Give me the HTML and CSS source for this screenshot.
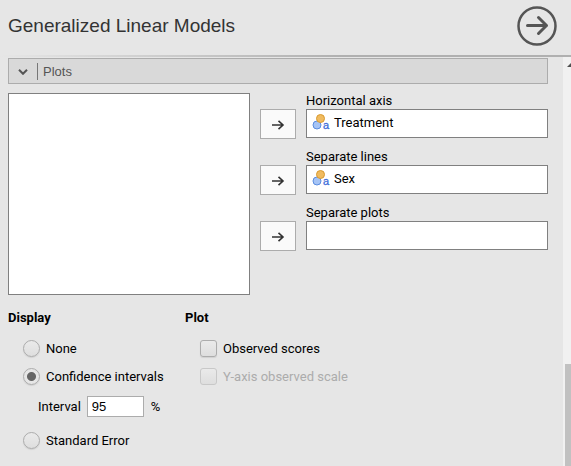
FILE: index.html
```html
<!DOCTYPE html>
<html lang="en">
<head>
<meta charset="utf-8">
<title>Generalized Linear Models</title>
<link rel="stylesheet" href="styles.css">
</head>
<body>
<header class="titlebar">
  <h1>Generalized Linear Models</h1>
  <button class="close" type="button" aria-label="Hide options">
    <svg viewBox="0 0 40 40"><circle cx="20" cy="20" r="18.500"/><path d="M10.500 19.500H29.500M21.500 11.500L29.500 19.500L21.500 27.500"/></svg>
  </button>
</header>
<div class="body">
  <main class="options">
    <button class="section" type="button" aria-expanded="true">
      <svg class="chevron" viewBox="0 0 10 6"><path d="M1 .8L5 4.800L9 .8"/></svg>
      <span class="section-name">Plots</span>
    </button>
    <div class="supplier">
      <div class="variables"></div>
      <div class="targets">
        <div class="target">
          <span class="target-label">Horizontal axis</span>
          <button class="assign" type="button" aria-label="Assign to Horizontal axis"><svg viewBox="0 0 12 10"><path d="M0 5H11M6.500 .8L11 5L6.500 9.200"/></svg></button>
          <div class="drop">
            <svg viewBox="0 0 18 18"><circle class="blue" cx="5" cy="12" r="4"/><circle class="orange" cx="8.500" cy="5.500" r="4"/><text x="11" y="16">a</text></svg>
            <span>Treatment</span>
          </div>
        </div>
        <div class="target">
          <span class="target-label">Separate lines</span>
          <button class="assign" type="button" aria-label="Assign to Separate lines"><svg viewBox="0 0 12 10"><path d="M0 5H11M6.500 .8L11 5L6.500 9.200"/></svg></button>
          <div class="drop">
            <svg viewBox="0 0 18 18"><circle class="blue" cx="5" cy="12" r="4"/><circle class="orange" cx="8.500" cy="5.500" r="4"/><text x="11" y="16">a</text></svg>
            <span>Sex</span>
          </div>
        </div>
        <div class="target">
          <span class="target-label">Separate plots</span>
          <button class="assign" type="button" aria-label="Assign to Separate plots"><svg viewBox="0 0 12 10"><path d="M0 5H11M6.500 .8L11 5L6.500 9.200"/></svg></button>
          <div class="drop"></div>
        </div>
      </div>
    </div>
    <div class="groups">
      <section class="group">
        <h2>Display</h2>
        <label class="choice"><input type="radio" name="display"><span>None</span></label>
        <label class="choice"><input type="radio" name="display" checked><span>Confidence intervals</span></label>
        <div class="interval"><label for="width">Interval</label><input id="width" type="text" value="95"><span>%</span></div>
        <label class="choice"><input type="radio" name="display"><span>Standard Error</span></label>
      </section>
      <section class="group">
        <h2>Plot</h2>
        <label class="choice"><input type="checkbox"><span>Observed scores</span></label>
        <label class="choice disabled"><input type="checkbox" disabled><span>Y-axis observed scale</span></label>
      </section>
    </div>
  </main>
  <div class="scrollbar">
    <div class="scroll-up"></div>
    <div class="thumb"></div>
  </div>
</div>
</body>
</html>
```
FILE: styles.css
```css
* { box-sizing: border-box; }

body {
  margin: 0;
  height: 100vh;
  display: flex;
  flex-direction: column;
  overflow: hidden;
  background: #e6e6e6;
  color: #000;
  font: 13px/16px Roboto, sans-serif;
}

button, input { font: inherit; margin: 0; }

svg { display: block; fill: none; }

.titlebar {
  display: flex;
  justify-content: space-between;
  align-items: center;
  padding: 6px 14px 9px 8px;
  border-bottom: 2px solid;
  border-image: linear-gradient(to right, #e6e6e6, #b0b0b0 60%) 1;
}

h1 {
  margin: 0;
  font: 19px/24px "Liberation Sans", sans-serif;
  color: #333;
}

.close { padding: 0; border: 0; background: none; }
.close svg { width: 40px; height: 40px; stroke: #555; stroke-width: 3; stroke-linecap: round; stroke-linejoin: round; }
.close circle { stroke-width: 2.5; }

.body { flex: 1; display: flex; min-height: 0; }

.options { flex: 1; padding: 1px 15px 0 8px; }

.section {
  display: flex;
  align-items: center;
  width: 100%;
  height: 26px;
  padding: 0 9px;
  border: 1px solid #acacac;
  background: #d9d9d9;
  color: #555;
  font-family: "Liberation Sans", sans-serif;
  text-align: left;
}

.chevron { width: 10px; height: 6px; margin: 2px 9px 0 0; stroke: #555; stroke-width: 2; }
.section-name { padding: 1px 0 0 5px; border-left: 1px solid #777; }

.supplier { display: flex; gap: 10px; margin-top: 9px; }

.variables {
  flex: 0 0 calc(50% - 28px);
  height: 202px;
  border: 1px solid #808080;
  background: #fff;
}

.targets { flex: 1; display: flex; flex-direction: column; gap: 10px; }

.target {
  display: grid;
  grid-template-columns: 36px 1fr;
  grid-template-rows: 16px 30px;
  column-gap: 10px;
  align-items: start;
}

.target-label { grid-column: 2; }

.assign {
  display: grid;
  place-items: center;
  height: 30px;
  padding: 2px 0 0;
  border: 1px solid #acacac;
  background: #fafafa;
}
.assign svg { width: 12px; height: 10px; stroke: #333; stroke-width: 1.6; overflow: visible; }

.drop {
  display: flex;
  gap: 4px;
  height: 29px;
  padding: 3px 5px;
  border: 1px solid #808080;
  background: #fff;
  line-height: 20px;
}
.drop svg { width: 18px; height: 18px; overflow: visible; }
.drop text { font: 11px "Liberation Sans", sans-serif; fill: #3e6dd9; stroke: #3e6dd9; stroke-width: 0.3; }

.blue { fill: #a6c4f5; stroke: #5b8de0; }
.orange { fill: #f0bb60; stroke: #d99a30; }

.groups { display: grid; grid-template-columns: 177px 1fr; margin-top: 15px; }

h2 { margin: 0 0 8px; font-size: 13px; line-height: 16px; font-weight: 700; }

.choice {
  display: flex;
  align-items: center;
  gap: 6px;
  height: 28px;
  padding-left: 15px;
}
.choice span { padding-top: 1px; }

.choice input {
  appearance: none;
  width: 17px;
  height: 17px;
  border: 1px solid #acacac;
  border-radius: 3px;
  background: linear-gradient(#eaeaea, #dedede);
  box-shadow: 0 1px 1px #d0d0d0;
}
.choice input[type="radio"] { border-radius: 50%; }
.choice input[type="radio"]:checked {
  background: radial-gradient(circle, #666 0 4px, #e6e6e6 5px);
}
.disabled { color: #acacac; }
.disabled input { border-color: #c8c8c8; box-shadow: none; }

.interval {
  display: flex;
  align-items: center;
  height: 32px;
  margin-bottom: 4px;
  padding-left: 30px;
  gap: 6px;
}
.interval label, .interval span { padding-top: 1px; }
.interval span { margin-left: 1px; }
.interval input {
  width: 57px;
  height: 21px;
  padding: 0 4px;
  border: 1px solid #acacac;
  background: #fff;
  font-family: "Liberation Sans", sans-serif;
}

.scrollbar {
  width: 8px;
  display: flex;
  flex-direction: column;
  justify-content: space-between;
  padding-left: 2px;
  background: #f1f1f1;
}
.scroll-up {
  width: 4px;
  height: 4px;
  margin: 6px 0 0 2px;
  background: #505050;
  clip-path: polygon(0 100%, 100% 0, 100% 100%);
}
.thumb { height: 25%; background: #c1c1c1; }
```
